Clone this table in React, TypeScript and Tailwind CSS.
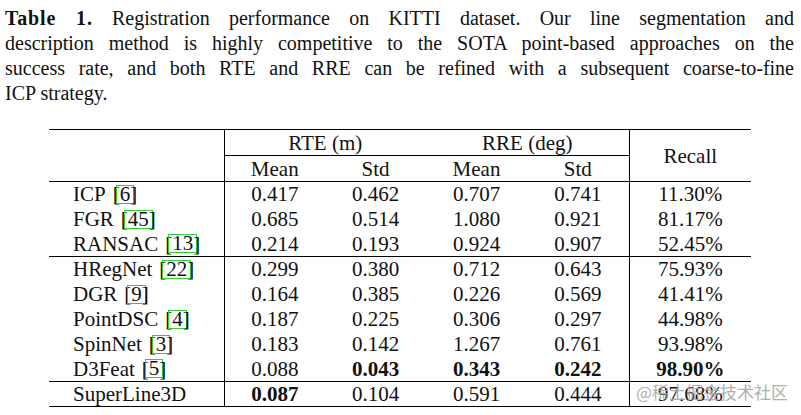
import React from "react";

type Row = {
  name: string;
  cite?: string;
  values: string[];
  bold?: number[];
};

const classical: Row[] = [
  { name: "ICP", cite: "6", values: ["0.417", "0.462", "0.707", "0.741", "11.30%"] },
  { name: "FGR", cite: "45", values: ["0.685", "0.514", "1.080", "0.921", "81.17%"] },
  { name: "RANSAC", cite: "13", values: ["0.214", "0.193", "0.924", "0.907", "52.45%"] },
];

const learned: Row[] = [
  { name: "HRegNet", cite: "22", values: ["0.299", "0.380", "0.712", "0.643", "75.93%"] },
  { name: "DGR", cite: "9", values: ["0.164", "0.385", "0.226", "0.569", "41.41%"] },
  { name: "PointDSC", cite: "4", values: ["0.187", "0.225", "0.306", "0.297", "44.98%"] },
  { name: "SpinNet", cite: "3", values: ["0.183", "0.142", "1.267", "0.761", "93.98%"] },
  {
    name: "D3Feat",
    cite: "5",
    values: ["0.088", "0.043", "0.343", "0.242", "98.90%"],
    bold: [1, 2, 3, 4],
  },
];

const ours: Row = {
  name: "SuperLine3D",
  values: ["0.087", "0.104", "0.591", "0.444", "97.68%"],
  bold: [0],
};

function Cite({ n }: { n: string }) {
  return (
    <span className="ml-[7px] inline-flex items-center">
      <span>[</span>
      <span className="-mx-[4px] inline-block border border-[#2fcf2f] px-[3px] leading-[17px]">
        {n}
      </span>
      <span>]</span>
    </span>
  );
}

function DataRow({ row, topLine, bottomLine }: { row: Row; topLine?: boolean; bottomLine?: boolean }) {
  return (
    <tr
      className={`h-[25px] ${topLine ? "border-t border-black" : ""} ${
        bottomLine ? "border-b border-black" : ""
      }`}
    >
      <td className="border-r border-black pl-[24px] text-left whitespace-nowrap">
        {row.name}
        {row.cite && <Cite n={row.cite} />}
      </td>
      {row.values.map((v, i) => (
        <td
          key={i}
          className={`text-center ${i === 4 ? "border-l border-black" : ""} ${
            row.bold?.includes(i) ? "font-bold" : ""
          }`}
        >
          {v}
        </td>
      ))}
    </tr>
  );
}

export default function App() {
  return (
    <div className="relative w-[801px] h-[415px] overflow-hidden bg-white text-[#111] font-['Liberation_Serif',serif]">
      <div className="pl-[5px] pr-[7px] pt-[6px] text-[20px] leading-[25px]">
        <div className="text-justify [text-align-last:justify]">
          <span className="font-bold tracking-[0.04em]">Table 1.</span> Registration performance
          on KITTI dataset. Our line segmentation and
        </div>
        <div className="text-justify [text-align-last:justify]">
          description method is highly competitive to the SOTA point-based approaches on the
        </div>
        <div className="text-justify [text-align-last:justify]">
          success rate, and both RTE and RRE can be refined with a subsequent coarse-to-fine
        </div>
        <div>ICP strategy.</div>
      </div>

      <table className="mt-[23px] ml-[49px] w-[702px] table-fixed border-collapse text-[21px] leading-[24px]">
        <colgroup>
          <col className="w-[175px]" />
          <col className="w-[101px]" />
          <col className="w-[101px]" />
          <col className="w-[101px]" />
          <col className="w-[102px]" />
          <col className="w-[122px]" />
        </colgroup>
        <thead>
          <tr className="h-[26px] border-t border-black">
            <td rowSpan={2} className="border-r border-b border-black" />
            <td colSpan={2} className="border-b border-black text-center">
              RTE (m)
            </td>
            <td colSpan={2} className="border-b border-black text-center">
              RRE (deg)
            </td>
            <td rowSpan={2} className="border-l border-b border-black text-center">
              Recall
            </td>
          </tr>
          <tr className="h-[26px] border-b border-black">
            <td className="text-center">Mean</td>
            <td className="text-center">Std</td>
            <td className="text-center">Mean</td>
            <td className="text-center">Std</td>
          </tr>
        </thead>
        <tbody>
          {classical.map((r) => (
            <DataRow key={r.name} row={r} />
          ))}
          {learned.map((r, i) => (
            <DataRow key={r.name} row={r} topLine={i === 0} />
          ))}
          <DataRow row={ours} topLine bottomLine />
        </tbody>
      </table>

      <div className="absolute left-[636px] top-[380px] text-[17px] leading-[24px] text-[#a8a8a8] opacity-90 font-['Noto_Sans_CJK_SC',sans-serif]">
        @稀土掘金技术社区
      </div>
    </div>
  );
}
